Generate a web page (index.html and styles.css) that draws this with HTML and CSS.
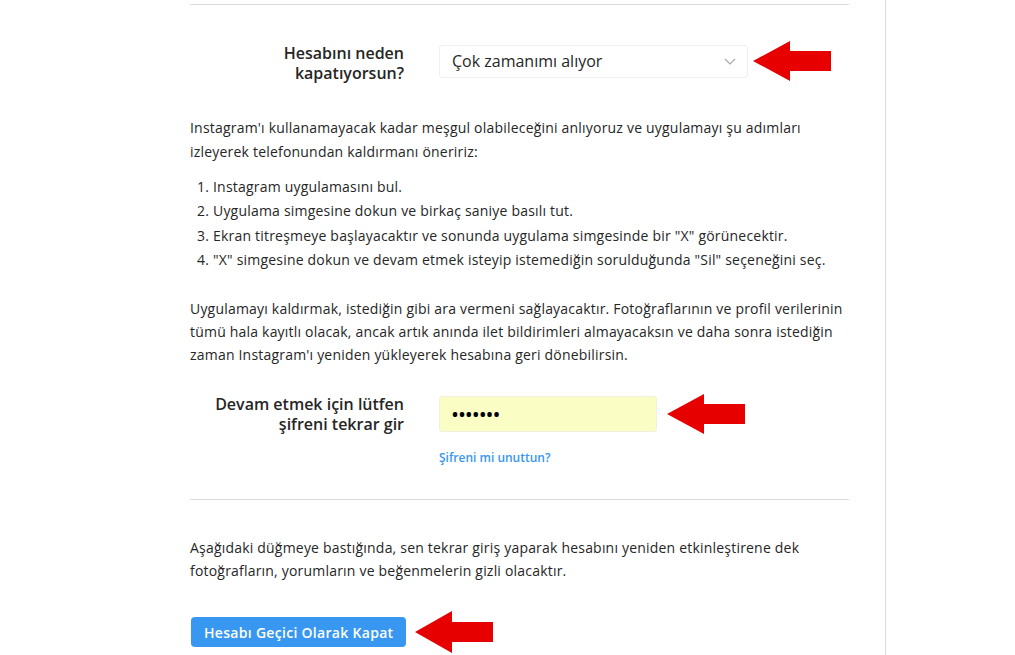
FILE: index.html
```html
<!DOCTYPE html>
<html lang="tr">
<head>
  <meta charset="UTF-8" />
  <meta name="viewport" content="width=device-width, initial-scale=1" />
  <title>Hesabını Geçici Olarak Kapat</title>
  <link rel="stylesheet" href="styles.css">
</head>
<body>
  <div class="page">
    <main class="main">
      <div class="content">
        <hr class="rule">

        <div class="field-row reason-row">
          <label class="field-label" for="reason">Hesabını neden<br>kapatıyorsun?</label>
          <div class="select" id="reason">
            <span>Çok zamanımı alıyor</span>
            <svg class="chevron" width="12" height="7" viewBox="0 0 12 7">
              <polyline points="1,1 6,6 11,1" fill="none" stroke="#a8a8a8" stroke-width="1.2" />
            </svg>
          </div>
          <svg class="arrow arrow-select" width="78" height="40" viewBox="0 0 78 40">
            <polygon points="0,20 37,0 37,10 78,10 78,30 37,30 37,40" fill="#e60000" />
          </svg>
        </div>

        <p class="text first">
          Instagram'ı kullanamayacak kadar meşgul olabileceğini anlıyoruz ve uygulamayı şu adımları
          izleyerek telefonundan kaldırmanı öneririz:
        </p>

        <ol class="steps">
          <li>Instagram uygulamasını bul.</li>
          <li>Uygulama simgesine dokun ve birkaç saniye basılı tut.</li>
          <li>Ekran titreşmeye başlayacaktır ve sonunda uygulama simgesinde bir "X" görünecektir.</li>
          <li>"X" simgesine dokun ve devam etmek isteyip istemediğin sorulduğunda "Sil" seçeneğini seç.</li>
        </ol>

        <p class="text second">
          Uygulamayı kaldırmak, istediğin gibi ara vermeni sağlayacaktır. Fotoğraflarının ve profil verilerinin
          tümü hala kayıtlı olacak, ancak artık anında ilet bildirimleri almayacaksın ve daha sonra istediğin
          zaman Instagram'ı yeniden yükleyerek hesabına geri dönebilirsin.
        </p>

        <div class="field-row password-row">
          <label class="field-label" for="password">Devam etmek için lütfen<br>şifreni tekrar gir</label>
          <div class="password" id="password">•••••••</div>
          <svg class="arrow arrow-password" width="78" height="40" viewBox="0 0 78 40">
            <polygon points="0,20 37,0 37,10 78,10 78,30 37,30 37,40" fill="#e60000" />
          </svg>
        </div>
        <a class="forgot" href="#">Şifreni mi unuttun?</a>

        <hr class="rule lower">

        <p class="text third">
          Aşağıdaki düğmeye bastığında, sen tekrar giriş yaparak hesabını yeniden etkinleştirene dek
          fotoğrafların, yorumların ve beğenmelerin gizli olacaktır.
        </p>

        <div class="actions">
          <button class="btn-primary">Hesabı Geçici Olarak Kapat</button>
          <svg class="arrow arrow-button" width="78" height="42" viewBox="0 0 78 42">
            <polygon points="0,21 37,0 37,11 78,11 78,31 37,31 37,42" fill="#e60000" />
          </svg>
        </div>
      </div>
    </main>
    <aside class="side"></aside>
  </div>
</body>
</html>
```

FILE: styles.css
```css
body {
  margin: 0;
  background: #fff;
  font-family: "Open Sans", "Noto Sans", sans-serif;
  color: #262626;
}
.page {
  display: flex;
  min-height: 655px;
}
.main {
  width: 885px;
  border-right: 1px solid #dbdbdb;
}
.side {
  flex: 1;
  background: #fff;
}
.content {
  width: 659px;
  margin-left: 190px;
  padding-top: 4px;
}
.rule {
  border: none;
  border-top: 1px solid #dbdbdb;
  margin: 0;
}
.rule.lower {
  margin-top: 33px;
}
.field-row {
  display: flex;
  align-items: center;
}
.reason-row {
  margin-top: 34px;
}
.reason-row .field-label {
  padding-top: 4px;
}
.field-label {
  flex: 0 0 214px;
  margin-right: 35px;
  text-align: right;
  font-size: 16px;
  font-weight: 600;
  line-height: 20px;
}
.select {
  box-sizing: border-box;
  width: 309px;
  height: 33px;
  border: 1px solid #efefef;
  border-radius: 3px;
  display: flex;
  align-items: center;
  justify-content: space-between;
  padding: 0 11px 0 12px;
  font-size: 16px;
}
.arrow-select {
  margin-left: 5px;
}
.text {
  font-size: 14px;
  letter-spacing: 0.2px;
  line-height: 24px;
  margin: 0;
}
.text.first {
  margin-top: 33px;
}
.steps {
  font-size: 14px;
  letter-spacing: 0.2px;
  line-height: 24.3px;
  margin: 11px 0 0;
  padding-left: 23px;
}
.text.second {
  margin-top: 25px;
  line-height: 23px;
}
.password-row {
  margin-top: 28px;
}
.password {
  box-sizing: border-box;
  width: 218px;
  height: 36px;
  background: #fafdc4;
  border: 1px solid #f0f0dc;
  border-radius: 3px;
  padding-left: 12px;
  display: flex;
  align-items: center;
  font-size: 16px;
  letter-spacing: 0.9px;
  font-weight: 700;
  color: #000;
}
.arrow-password {
  margin-left: 10px;
}
.forgot {
  display: block;
  margin: 16px 0 0 249px;
  font-size: 12px;
  font-weight: 600;
  line-height: 16px;
  color: #3897f0;
  text-decoration: none;
}
.text.third {
  margin-top: 36px;
  line-height: 23px;
}
.actions {
  display: flex;
  align-items: center;
  margin-top: 29px;
}
.btn-primary {
  height: 30px;
  padding: 0 13px;
  background: #3897f0;
  color: #fff;
  border: none;
  border-radius: 4px;
  font-family: inherit;
  font-size: 14px;
  font-weight: 600;
  letter-spacing: 0.3px;
  margin-left: 1px;
}
.arrow-button {
  margin-left: 9px;
}
```
